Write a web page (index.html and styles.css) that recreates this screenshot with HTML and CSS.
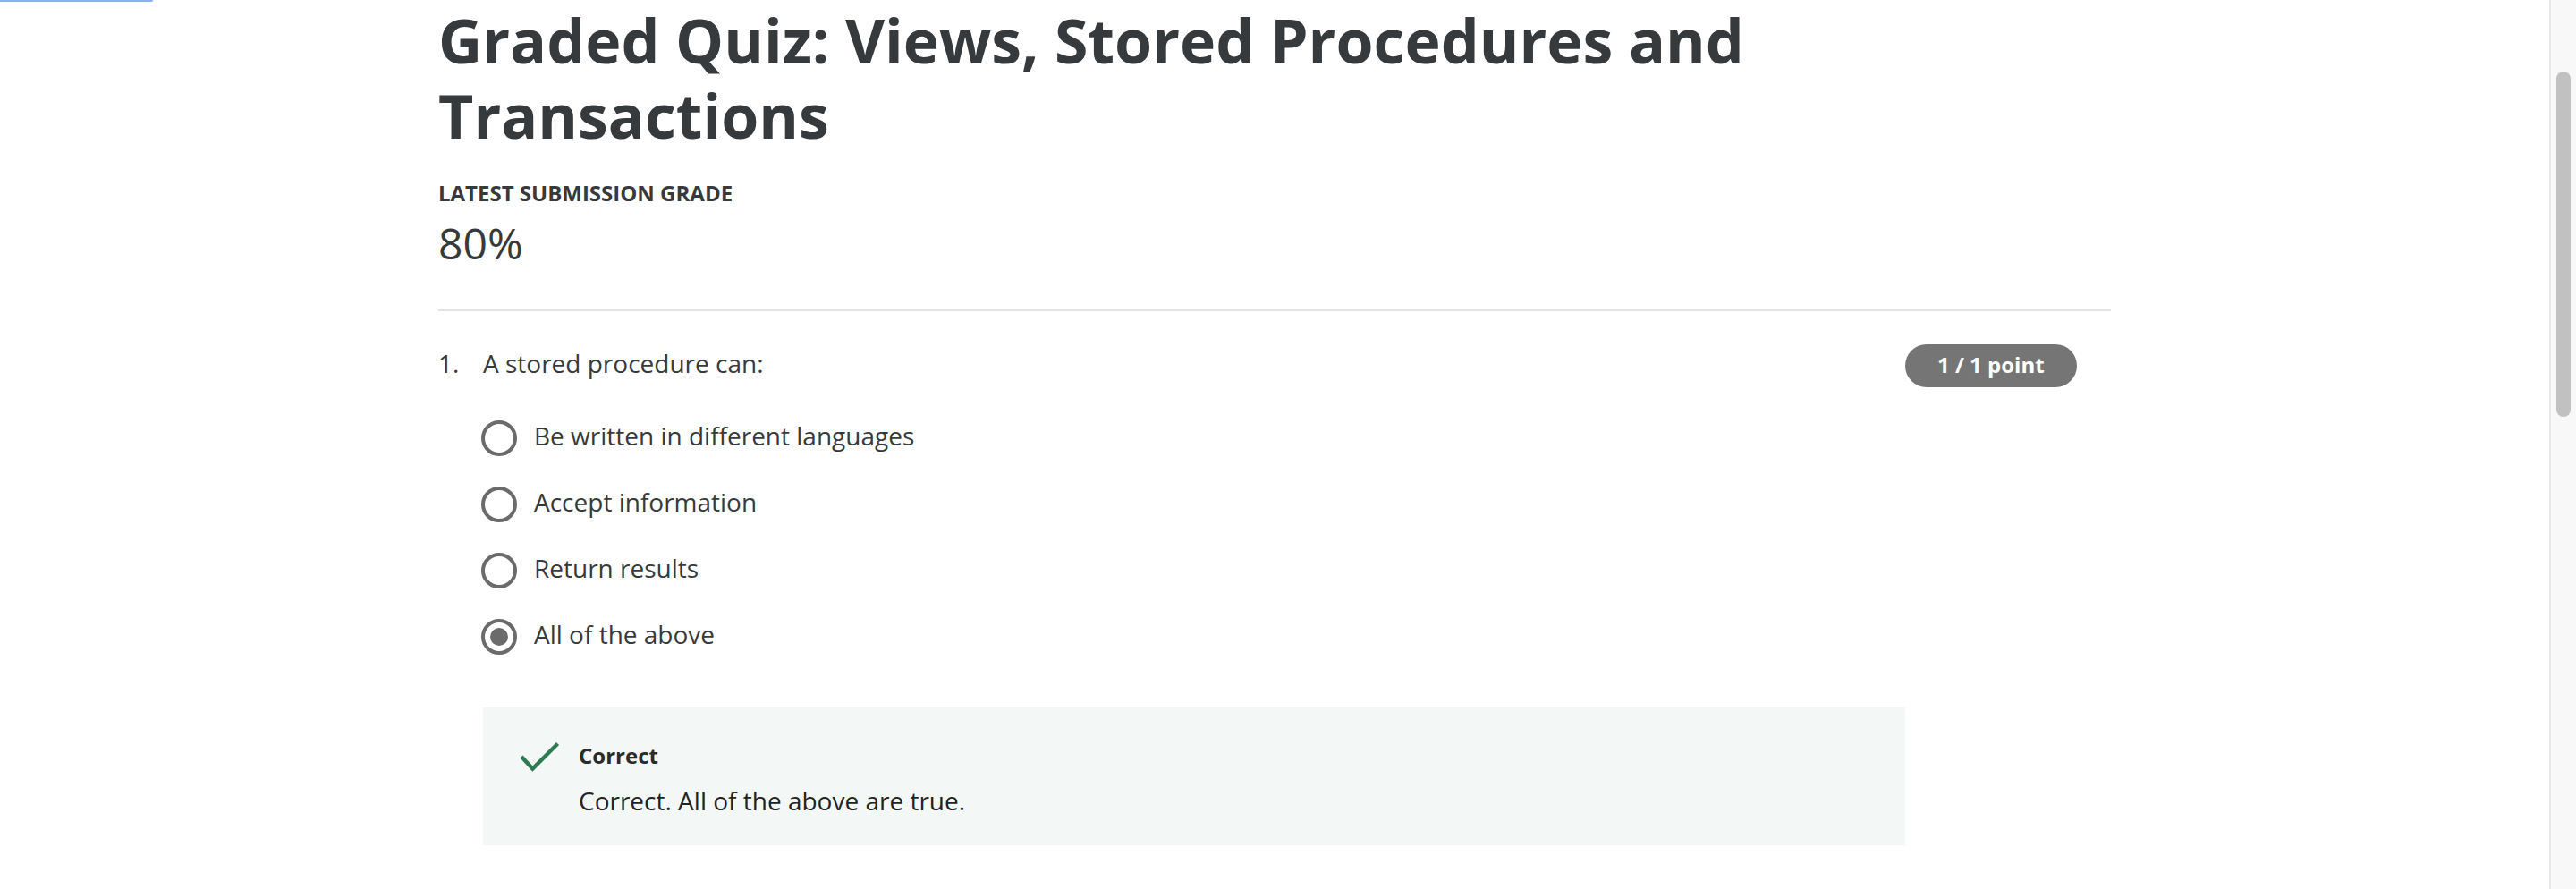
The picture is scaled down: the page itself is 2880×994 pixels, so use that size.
FILE: index.html
```html
<!DOCTYPE html>
<html lang="en">
<head>
<meta charset="utf-8">
<title>Graded Quiz: Views, Stored Procedures and Transactions</title>
<link rel="stylesheet" href="styles.css">
</head>
<body>
<div class="window">
  <div class="page">
    <div class="focus-bar"></div>
    <main class="content">
      <h1 class="title">Graded Quiz: Views, Stored Procedures and Transactions</h1>
      <div class="grade-label">LATEST SUBMISSION GRADE</div>
      <div class="grade-value">80%</div>
      <hr class="divider">
      <section class="question">
        <div class="q-number">1.</div>
        <div class="q-body">
          <div class="q-text">A stored procedure can:</div>
          <ul class="options">
            <li class="option"><span class="radio"></span><span class="opt-text">Be written in different languages</span></li>
            <li class="option"><span class="radio"></span><span class="opt-text">Accept information</span></li>
            <li class="option"><span class="radio"></span><span class="opt-text">Return results</span></li>
            <li class="option"><span class="radio checked"></span><span class="opt-text">All of the above</span></li>
          </ul>
          <div class="feedback">
            <svg class="check" width="46" height="34" viewBox="0 0 46 34" aria-hidden="true">
              <path d="M3 17 L15.5 30.5 L43.5 2.5" fill="none" stroke="#2f7a52" stroke-width="4.4"/>
            </svg>
            <div class="fb-texts">
              <div class="fb-title">Correct</div>
              <div class="fb-body">Correct. All of the above are true.</div>
            </div>
          </div>
        </div>
        <div class="q-points"><span class="badge">1 / 1 point</span></div>
      </section>
    </main>
  </div>
  <div class="scrollbar"><div class="thumb"></div></div>
</div>
</body>
</html>
```

FILE: styles.css
```css
* { box-sizing: border-box; }

html, body {
  margin: 0;
  padding: 0;
  background: #ffffff;
}

body {
  font-family: "Open Sans", "Noto Sans", sans-serif;
  color: #373a3c;
}

.window {
  display: flex;
  height: 994px;
  overflow: hidden;
}

.page {
  flex: 1;
  position: relative;
  overflow: hidden;
}

.focus-bar {
  position: absolute;
  left: 0;
  top: 0;
  width: 171px;
  height: 2px;
  background: #8ab0f4;
  border-radius: 0 0 2px 0;
}

.content {
  width: 1870px;
  margin: 0 auto;
  padding-top: 3px;
}

.title {
  margin: 0;
  font-size: 68px;
  line-height: 84px;
  font-weight: 700;
  color: #373a3c;
}

.grade-label {
  margin-top: 30px;
  font-size: 24px;
  line-height: 30px;
  font-weight: 700;
  color: #373a3c;
}

.grade-value {
  margin-top: 9px;
  font-size: 48px;
  line-height: 64px;
  font-weight: 400;
  color: #373a3c;
}

.divider {
  margin: 42px 0 0 0;
  border: 0;
  height: 2px;
  background: #e3e3e3;
}

.question {
  display: grid;
  grid-template-columns: 50px 1fr 230px;
  padding-top: 37px;
}

.q-number,
.q-text {
  font-size: 28px;
  line-height: 42px;
}

.options {
  list-style: none;
  margin: 40px 0 0 0;
  padding: 0;
  display: flex;
  flex-direction: column;
  gap: 31px;
}

.option {
  display: flex;
  align-items: flex-start;
  gap: 19px;
}

.radio {
  flex: none;
  width: 40px;
  height: 40px;
  margin: 3px 0 0 -2px;
  border: 4px solid #6b6b6b;
  border-radius: 50%;
  display: flex;
  align-items: center;
  justify-content: center;
}

.radio.checked::after {
  content: "";
  width: 20px;
  height: 20px;
  border-radius: 50%;
  background: #6b6b6b;
}

.opt-text {
  font-size: 28px;
  line-height: 40px;
}

.feedback {
  margin-top: 59px;
  background: #f3f8f6;
  padding: 38px 40px 30px 40px;
  display: flex;
  align-items: flex-start;
  gap: 21px;
}

.check {
  flex: none;
  margin-top: 0;
}

.fb-title {
  font-size: 24px;
  line-height: 32px;
  font-weight: 700;
  color: #2b2b2b;
}

.fb-body {
  margin-top: 14px;
  font-size: 28px;
  line-height: 40px;
  color: #232323;
}

.q-points {
  display: flex;
  align-items: flex-start;
}

.badge {
  display: inline-block;
  height: 48px;
  padding: 0 36px;
  border-radius: 24px;
  background: #757575;
  color: #ffffff;
  font-size: 24px;
  line-height: 46px;
  font-weight: 700;
  white-space: nowrap;
}

.scrollbar {
  flex: none;
  width: 30px;
  height: 100%;
  background: #f8f8f8;
  border-left: 2px solid #e8e8e8;
  padding: 80px 6px 0 6px;
}

.thumb {
  width: 16px;
  height: 386px;
  border-radius: 8px;
  background: #c1c1c1;
}
```
